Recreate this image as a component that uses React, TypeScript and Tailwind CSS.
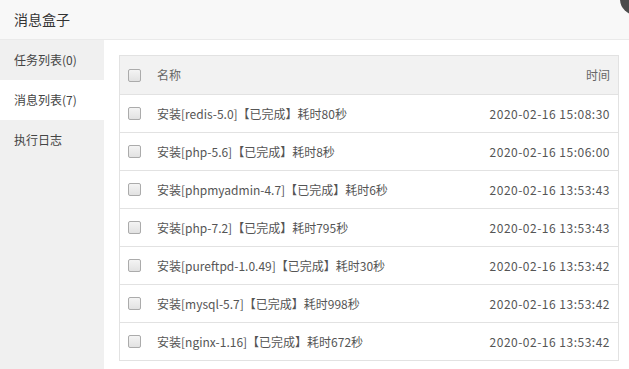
import { X } from "lucide-react";

type Msg = { name: string; time: string };

const messages: Msg[] = [
  { name: "安装[redis-5.0]【已完成】耗时80秒", time: "2020-02-16 15:08:30" },
  { name: "安装[php-5.6]【已完成】耗时8秒", time: "2020-02-16 15:06:00" },
  { name: "安装[phpmyadmin-4.7]【已完成】耗时6秒", time: "2020-02-16 13:53:43" },
  { name: "安装[php-7.2]【已完成】耗时795秒", time: "2020-02-16 13:53:43" },
  { name: "安装[pureftpd-1.0.49]【已完成】耗时30秒", time: "2020-02-16 13:53:42" },
  { name: "安装[mysql-5.7]【已完成】耗时998秒", time: "2020-02-16 13:53:42" },
  { name: "安装[nginx-1.16]【已完成】耗时672秒", time: "2020-02-16 13:53:42" },
];

const tabs = [
  { label: "任务列表(0)", active: false },
  { label: "消息列表(7)", active: true },
  { label: "执行日志", active: false },
];

function Checkbox() {
  return (
    <span className="block h-[13px] w-[13px] shrink-0 rounded-[2px] border border-[#ababab] bg-gradient-to-b from-[#f4f4f4] to-[#e2e2e2]" />
  );
}

export default function App() {
  return (
    <div className="relative h-[369px] w-[629px] overflow-hidden bg-white font-['Noto_Sans_CJK_SC','Noto_Sans',sans-serif] text-[12px] text-[#555]">
      <div className="flex h-[40px] items-center border-b border-[#eaeaea] bg-[#f8f8f8] pl-[14px] text-[14px] text-[#333]">
        消息盒子
      </div>

      <div className="flex h-[329px]">
        <div className="w-[104px] shrink-0 bg-[#f0f0f0]">
          {tabs.map((t) => (
            <div
              key={t.label}
              className={`flex h-[40px] items-center pl-[14px] text-[#444] ${
                t.active ? "bg-white" : ""
              }`}
            >
              {t.label}
            </div>
          ))}
        </div>

        <div className="flex-1 pl-[15px] pt-[15px]">
          <div className="w-[500px] border border-[#e2e2e2]">
            <div className="flex h-[38px] items-center bg-[#f2f2f2] pl-[8px] pr-[8px]">
              <Checkbox />
              <span className="ml-[16px] flex-1 text-[#666]">名称</span>
              <span className="text-[#666]">时间</span>
            </div>
            {messages.map((m, i) => (
              <div
                key={i}
                className="flex h-[38px] items-center border-t border-[#e2e2e2] pl-[8px] pr-[8px]"
              >
                <Checkbox />
                <span className="ml-[16px] flex-1">{m.name}</span>
                <span className="tracking-[0.5px]">{m.time}</span>
              </div>
            ))}
          </div>
        </div>
      </div>

      <div className="absolute left-[620px] top-[-17px] flex h-[32px] w-[32px] items-center justify-center rounded-full bg-[#4b4b4b]">
        <X size={18} strokeWidth={2.5} className="text-[#e5e5e5]" />
      </div>
    </div>
  );
}
